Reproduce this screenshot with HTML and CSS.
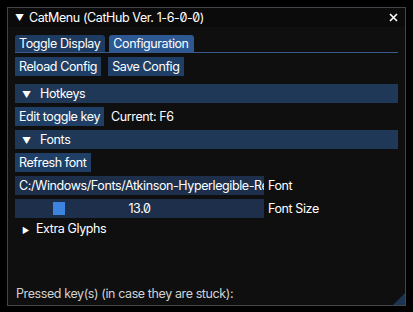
FILE: index.html
```html
<!DOCTYPE html>
<html lang="en">
<head>
  <meta charset="UTF-8">
  <title>CatMenu</title>
  <link rel="stylesheet" href="styles.css">
</head>
<body>
  <div class="window">
    <div class="titlebar">
      <span class="arrow-down">▼</span>
      <span class="title">CatMenu (CatHub Ver. 1-6-0-0)</span>
      <span class="close">
        <svg width="9" height="9" viewBox="0 0 9 9"><path d="M1 1L8 8M8 1L1 8" stroke="#fff" stroke-width="1.6"/></svg>
      </span>
    </div>

    <div class="content">
      <div class="tabbar">
        <div class="tab">Toggle Display</div>
        <div class="tab active">Configuration</div>
      </div>

      <div class="row">
        <button class="btn">Reload Config</button>
        <button class="btn">Save Config</button>
      </div>

      <div class="header header-first"><span class="arrow-down">▼</span>Hotkeys</div>
      <div class="row">
        <button class="btn">Edit toggle key</button>
        <span class="label">Current: F6</span>
      </div>

      <div class="header"><span class="arrow-down">▼</span>Fonts</div>
      <div class="row">
        <button class="btn">Refresh font</button>
      </div>
      <div class="row">
        <div class="frame input"><span class="input-text">C:/Windows/Fonts/Atkinson-Hyperlegible-Regular.ttf</span></div>
        <span class="label side">Font</span>
      </div>
      <div class="row">
        <div class="frame slider">
          <div class="grab"></div>
          <span class="slider-val">13.0</span>
        </div>
        <span class="label side">Font Size</span>
      </div>
      <div class="tree"><span class="arrow-right">▶</span>Extra Glyphs</div>

      <div class="spacer"></div>
      <div class="footer-text">Pressed key(s) (in case they are stuck):</div>
    </div>
    <div class="grip"></div>
  </div>
</body>
</html>
```

FILE: styles.css
```css
html, body { margin: 0; background: #000; }
body { padding: 7px; font-family: Inter, "Noto Sans", sans-serif; font-size: 12.5px; letter-spacing: -0.4px; color: #fff; font-feature-settings: "zero"; }

.window { position: relative; width: 397px; height: 297px; border: 1px solid #434349; background: #0f0f10; display: flex; flex-direction: column; }

.titlebar { height: 19px; display: flex; align-items: center; padding: 0 7px; background: #0b0b0c; }
.titlebar .arrow-down { font-size: 9px; width: 14px; }
.title { flex: 1; }
.close { display: flex; align-items: center; }

.content { flex: 1; display: flex; flex-direction: column; padding: 8px 7px 4px 7px; }

.tabbar { display: flex; gap: 4px; height: 17px; border-bottom: 1px solid #3a5a8c; }
.tab { padding: 0 5px 0 4px; height: 17px; line-height: 17px; background: #1e3c62; border-radius: 3px 3px 0 0; }
.tab.active { background: #2c5894; }

.row { display: flex; align-items: center; gap: 7px; margin-top: 4px; height: 19px; }

.btn { font: inherit; letter-spacing: inherit; color: #fff; border: 0; margin: 0; height: 19px; padding: 0 4px; background: #203f66; cursor: pointer; }

.header { margin-top: 4px; height: 19px; line-height: 19px; background: #1f3858; padding-left: 7px; }
.header-first { margin-top: 8px; }
.arrow-down { display: inline-block; font-size: 9px; width: 18px; letter-spacing: 0; }

.label { line-height: 19px; }
.label.side { margin-left: -3px; }

.frame { height: 19px; background: #1d2f4b; display: flex; align-items: center; }
.input { width: 249px; overflow: hidden; }
.input-text { display: block; width: 245px; padding-left: 4px; overflow: hidden; white-space: nowrap; }
.slider { position: relative; width: 249px; justify-content: center; }
.grab { position: absolute; left: 38px; top: 3px; width: 12px; height: 13px; background: #3d84df; }
.slider-val { position: relative; }

.tree { margin-top: 4px; height: 14px; line-height: 14px; padding-left: 7px; }
.arrow-right { display: inline-block; font-size: 8px; width: 14px; letter-spacing: 0; }

.spacer { flex: 1; }
.footer-text { color: #d2d2d2; height: 14px; line-height: 14px; padding-left: 1px; }

.grip { position: absolute; right: 0; bottom: 0; width: 0; height: 0; border-left: 12px solid transparent; border-bottom: 12px solid #1c3452; }
```
